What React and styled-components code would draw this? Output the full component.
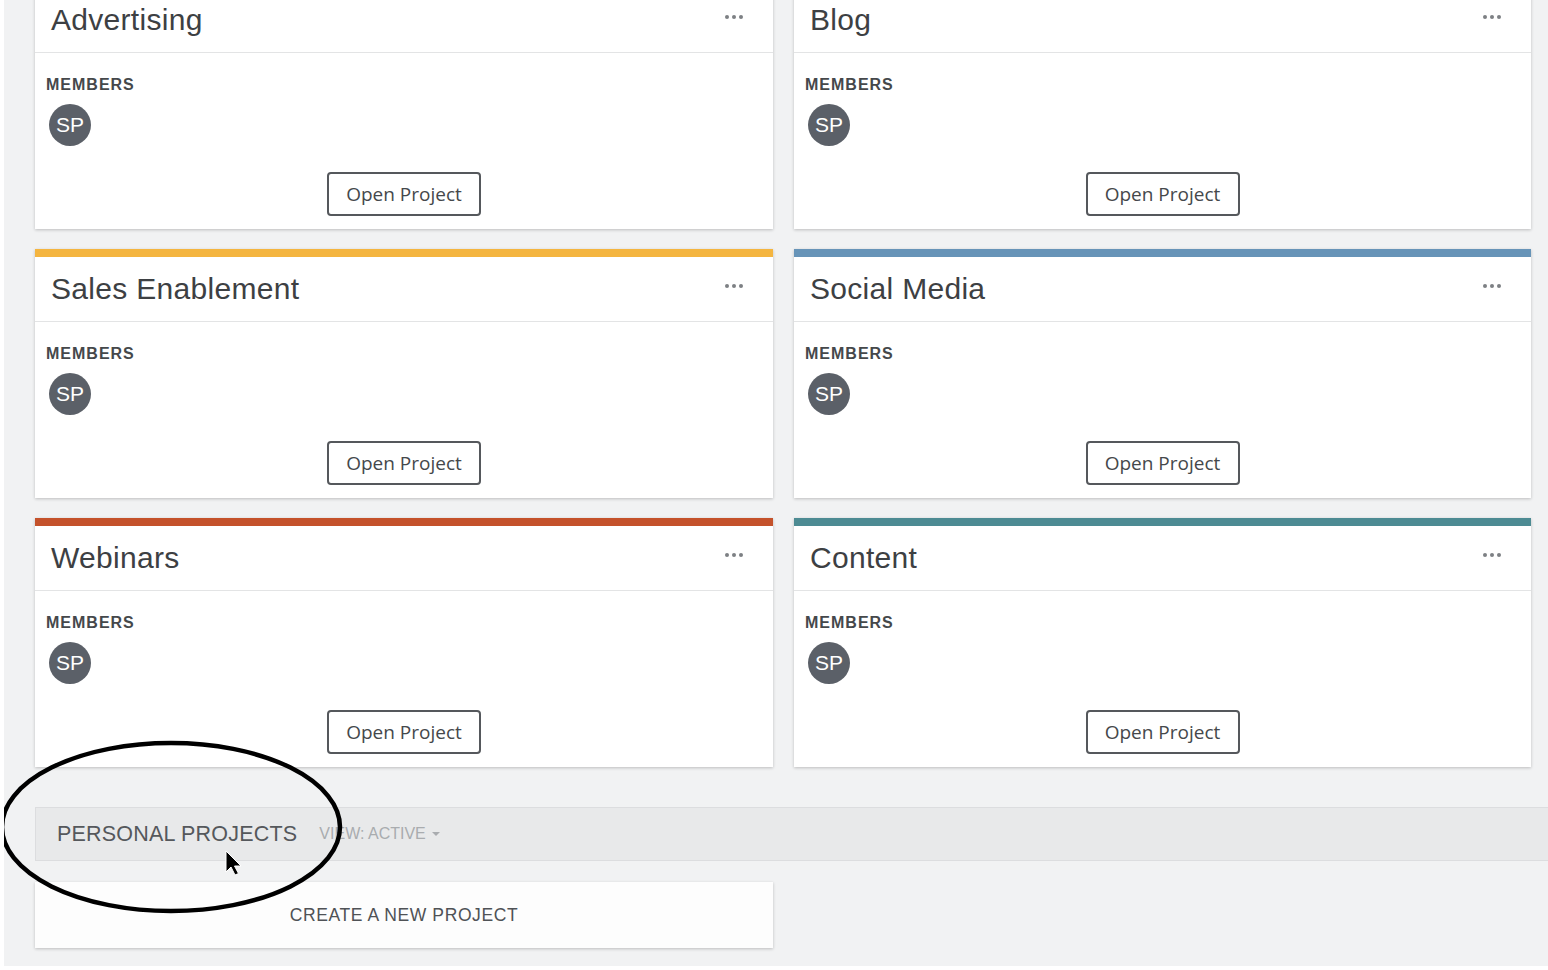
import styled, { createGlobalStyle } from "styled-components";

const GlobalStyle = createGlobalStyle`
  html, body {
    margin: 0;
    padding: 0;
    background: #ffffff;
    overflow: hidden;
  }
  body {
    font-family: "Liberation Sans", Arial, sans-serif;
  }
`;

const Page = styled.div`
  position: relative;
  margin-left: 4px;
  height: 966px;
  background: #f1f2f3;
  overflow: hidden;
  padding-left: 31px;
`;

const Grid = styled.div`
  display: grid;
  grid-template-columns: 738px 737px;
  column-gap: 21px;
  row-gap: 20px;
  margin-top: -20px;
`;

const Card = styled.div`
  display: flex;
  flex-direction: column;
  background: #ffffff;
  box-shadow: 0 1px 3px rgba(0, 0, 0, 0.22);
  border-top: 8px solid ${(p) => p.$color};
`;

const CardHeader = styled.div`
  display: flex;
  align-items: center;
  justify-content: space-between;
  height: 64px;
  padding: 0 30px 0 16px;
  border-bottom: 1px solid #e3e4e5;
`;

const Title = styled.h2`
  margin: 0;
  font-size: 30px;
  font-weight: 400;
  color: #3d4043;
  letter-spacing: 0.3px;
`;

const Dots = styled.span`
  display: flex;
  gap: 3px;
  margin-top: -6px;
  span {
    width: 4px;
    height: 4px;
    border-radius: 50%;
    background: #7d8084;
  }
`;

const CardBody = styled.div`
  display: flex;
  flex-direction: column;
  padding: 23px 11px 13px;
`;

const Label = styled.div`
  font-size: 16px;
  line-height: 18px;
  font-weight: 700;
  color: #45484b;
  letter-spacing: 1px;
`;

const Avatar = styled.div`
  width: 42px;
  height: 42px;
  margin: 10px 0 0 3px;
  border-radius: 50%;
  background: #5b6068;
  color: #ffffff;
  display: flex;
  align-items: center;
  justify-content: center;
  font-size: 21px;
  font-family: "Liberation Sans", Arial, sans-serif;
`;

const OpenButton = styled.button`
  align-self: center;
  margin-top: 26px;
  width: 154px;
  height: 44px;
  background: #ffffff;
  border: 2px solid #55585c;
  border-radius: 4px;
  font-family: "Open Sans", "Liberation Sans", sans-serif;
  font-size: 19px;
  color: #45484b;
  cursor: pointer;
`;

const SectionBar = styled.div`
  display: flex;
  align-items: center;
  gap: 22px;
  margin-top: 40px;
  height: 52px;
  padding-left: 21px;
  background: #e8e9ea;
  border: 1px solid #dcdddf;
  border-right: none;
`;

const SectionTitle = styled.span`
  font-size: 21.5px;
  color: #55585c;
  letter-spacing: 0.2px;
`;

const ViewSelect = styled.span`
  display: flex;
  align-items: center;
  gap: 6px;
  font-size: 16px;
  color: #a9acaf;
  &::after {
    content: "";
    border-left: 4px solid transparent;
    border-right: 4px solid transparent;
    border-top: 4px solid #a9acaf;
  }
`;

const CreateCard = styled.div`
  margin-top: 21px;
  width: 738px;
  height: 66px;
  display: flex;
  align-items: center;
  justify-content: center;
  background: #fdfdfd;
  box-shadow: 0 1px 3px rgba(0, 0, 0, 0.22);
  font-size: 17.5px;
  color: #4f5256;
  letter-spacing: 0.6px;
`;

const Annotation = styled.svg`
  position: absolute;
  left: -4px;
  top: 0;
  pointer-events: none;
`;

const projects = [
  { name: "Advertising", color: "#e4e6e8" },
  { name: "Blog", color: "#e4e6e8" },
  { name: "Sales Enablement", color: "#f4b540" },
  { name: "Social Media", color: "#6794b8" },
  { name: "Webinars", color: "#c4522b" },
  { name: "Content", color: "#4d8b93" },
];

const ProjectCard = ({ name, color }) => (
  <Card $color={color}>
    <CardHeader>
      <Title>{name}</Title>
      <Dots>
        <span />
        <span />
        <span />
      </Dots>
    </CardHeader>
    <CardBody>
      <Label>MEMBERS</Label>
      <Avatar>SP</Avatar>
      <OpenButton>Open Project</OpenButton>
    </CardBody>
  </Card>
);

const App = () => (
  <>
    <GlobalStyle />
    <Page>
      <Grid>
        {projects.map((p) => (
          <ProjectCard key={p.name} {...p} />
        ))}
      </Grid>
      <SectionBar>
        <SectionTitle>PERSONAL PROJECTS</SectionTitle>
        <ViewSelect>VIEW: ACTIVE</ViewSelect>
      </SectionBar>
      <CreateCard>CREATE A NEW PROJECT</CreateCard>
      <Annotation width="400" height="970" viewBox="0 0 400 970">
        <ellipse
          cx="171"
          cy="827"
          rx="169"
          ry="84"
          fill="none"
          stroke="#000"
          strokeWidth="4.5"
        />
        <path
          d="M226 851 L226 872 L231 867 L235 875 L238.5 873.5 L234.5 866 L241 866 Z"
          fill="#000"
          stroke="#fff"
          strokeWidth="1"
        />
      </Annotation>
    </Page>
  </>
);

export default App;
